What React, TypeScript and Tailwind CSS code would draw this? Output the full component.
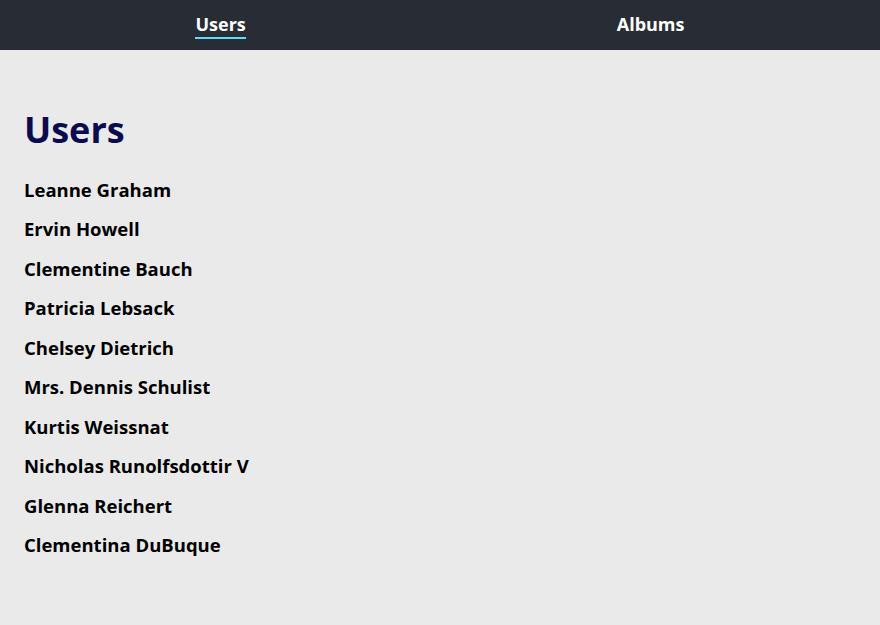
import React from 'react';

const users = [
  'Leanne Graham',
  'Ervin Howell',
  'Clementine Bauch',
  'Patricia Lebsack',
  'Chelsey Dietrich',
  'Mrs. Dennis Schulist',
  'Kurtis Weissnat',
  'Nicholas Runolfsdottir V',
  'Glenna Reichert',
  'Clementina DuBuque',
];

const App = () => {
  return (
    <div className="min-h-[625px] bg-[#eaeaea] font-['Open_Sans',sans-serif]">
      {/* Nav */}
      <nav className="h-[50px] bg-[#282c34] flex items-center justify-around px-[10px]">
        <a className="text-white font-bold text-[18px] leading-none pb-[4px] border-b-2 border-[#61dafb] mt-[4px]">
          Users
        </a>
        <a className="text-white font-bold text-[18px] leading-none pb-[4px] border-b-2 border-transparent mt-[4px]">
          Albums
        </a>
      </nav>

      {/* Content */}
      <main className="px-6 pt-[62px]">
        <h1 className="text-[36px] font-bold text-[#0b0b4f] leading-none mb-[22px]">Users</h1>
        <ul className="flex flex-col">
          {users.map((name) => (
            <li key={name} className="text-[18.5px] font-bold text-black h-[39.5px] flex items-center">
              {name}
            </li>
          ))}
        </ul>
      </main>
    </div>
  );
};

export default App;
